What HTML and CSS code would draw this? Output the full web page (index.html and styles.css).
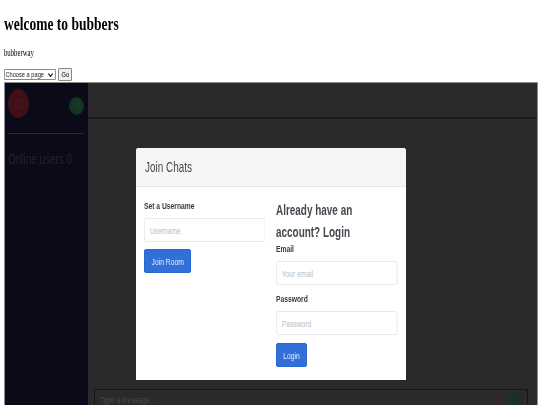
FILE: index.html
```html
<!DOCTYPE html>
<html lang="en">
<head>
  <meta charset="UTF-8">
  <title>welcome to bubbers</title>
  <link rel="stylesheet" href="styles.css">
</head>
<body>

  <div class="page">
    <h1 class="title"><span class="sq">welcome to bubbers</span></h1>
    <p class="tagline"><span class="sq">bubberway</span></p>

    <form class="page-picker">
      <div class="select-box">
        <select class="page-select">
          <option>Choose a page</option>
        </select>
      </div>
      <button type="button" class="page-go"><span class="sq-mid">Go</span></button>
    </form>

    <div class="chat-frame">
      <aside class="sidebar">
        <div class="sidebar-top">
          <div class="avatar">
            <svg width="7" height="10" viewBox="0 0 7 10"><rect x="1" y="1" width="5" height="8" fill="none" stroke="#52161f" stroke-width="1"/></svg>
          </div>
          <div class="mute">
            <svg width="8" height="10" viewBox="0 0 8 10"><path d="M1 1l6 8M5 1L2 4l3 3 2-4z" fill="none" stroke="#1b4027" stroke-width="1.1"/></svg>
          </div>
        </div>
        <div class="online"><span class="sq">Online users 0</span></div>
      </aside>

      <main class="room">
        <div class="room-top"></div>
        <div class="room-body"></div>
        <div class="composer">
          <span class="sq">Type a message...</span>
          <span class="composer-send"></span>
        </div>
      </main>

      <div class="modal">
        <div class="modal-head"><span class="sq">Join Chats</span></div>
        <div class="modal-body">
          <div class="col-join">
            <label class="field-label"><span class="sq">Set a Username</span></label>
            <input class="field-input" type="text" placeholder="Username">
            <button type="button" class="btn btn-join"><span class="sq-mid">Join Room</span></button>
          </div>
          <div class="col-login">
            <h4 class="login-title">
              <span class="sq">Already have an</span>
              <span class="sq">account? Login</span>
            </h4>
            <label class="field-label"><span class="sq">Email</span></label>
            <input class="field-input field-gap" type="text" placeholder="Your email">
            <label class="field-label"><span class="sq">Password</span></label>
            <input class="field-input" type="text" placeholder="Password">
            <button type="button" class="btn btn-login"><span class="sq-mid">Login</span></button>
          </div>
        </div>
      </div>
    </div>
  </div>

</body>
</html>
```

FILE: styles.css
```css
html, body {
  height: 405px;
  overflow: hidden;
}
body {
  margin: 0;
  background: #fff;
  font-family: "Liberation Serif", serif;
  color: #000;
}
.page {
  width: 540px;
  padding-left: 4px;
  box-sizing: border-box;
  filter: blur(0.35px);
}
/* all text in the picture is squeezed sideways */
.sq {
  display: inline-block;
  white-space: nowrap;
  transform: scaleX(0.71);
  transform-origin: 0 50%;
}
.sq-mid {
  display: inline-block;
  white-space: nowrap;
  transform: scaleX(0.71);
}
.title {
  margin: 0;
  padding-top: 13px;
  font-size: 19px;
  line-height: 22px;
  font-weight: bold;
}
.tagline {
  margin: 13px 0 0;
  font-size: 9.5px;
  line-height: 11px;
}
.page-picker {
  display: flex;
  align-items: center;
  gap: 2px;
  margin-top: 9px;
  height: 13px;
}
.select-box {
  width: 52px;
  height: 11px;
}
.page-select {
  display: block;
  appearance: none;
  width: 73px;
  height: 11px;
  padding: 0 0 0 1px;
  border: 1px solid #767676;
  border-radius: 1px;
  background: #fff url("data:image/svg+xml,%3Csvg xmlns='http://www.w3.org/2000/svg' width='7' height='4'%3E%3Cpath d='M.5.5l3 3 3-3' fill='none' stroke='%23222' stroke-width='1.4'/%3E%3C/svg%3E") no-repeat right 3px center;
  font-family: "Liberation Sans", sans-serif;
  font-size: 8px;
  line-height: 9px;
  color: #222;
  transform: scaleX(0.71);
  transform-origin: 0 0;
}
.page-go {
  display: flex;
  align-items: center;
  justify-content: center;
  width: 14px;
  height: 13px;
  padding: 0;
  border: 1px solid #8a8a8a;
  border-radius: 1px;
  background: #efefef;
  font-family: "Liberation Sans", sans-serif;
  font-size: 8px;
}
.chat-frame {
  position: relative;
  display: flex;
  width: 534px;
  height: 323px;
  margin-top: 1px;
  border: 1px solid #8c8c8c;
  border-bottom: 0;
  box-sizing: border-box;
}
.sidebar {
  width: 83px;
  flex-shrink: 0;
  background: #0b0a19;
  padding: 0 4px 0 3px;
  box-sizing: border-box;
}
.sidebar-top {
  display: flex;
  justify-content: space-between;
  height: 51px;
  border-bottom: 1px solid #2a2933;
  padding-top: 6px;
  box-sizing: border-box;
}
.avatar {
  display: flex;
  align-items: center;
  justify-content: center;
  width: 21px;
  height: 29px;
  border-radius: 50%;
  background: #401018;
}
.mute {
  display: flex;
  align-items: center;
  justify-content: center;
  width: 15px;
  height: 18px;
  margin-top: 8px;
  border-radius: 50%;
  background: #123420;
}
.online {
  margin-top: 17px;
  font-family: "Liberation Sans", sans-serif;
  font-size: 14px;
  line-height: 16px;
  color: #23222c;
}
.room {
  flex: 1;
  display: flex;
  flex-direction: column;
  background: #2a2a2a;
}
.room-top {
  height: 34px;
  border-bottom: 2px solid #1c1c1c;
}
.room-body {
  flex: 1;
}
.composer {
  display: flex;
  justify-content: space-between;
  height: 11px;
  margin: 0 9px 0 6px;
  padding: 4px 4px 0 5px;
  border: 1px solid #161616;
  border-bottom: 0;
  border-radius: 2px 2px 0 0;
  font-family: "Liberation Sans", sans-serif;
  font-size: 9.5px;
  line-height: 11px;
  color: #4a4a4a;
}
.composer-send {
  width: 16px;
  height: 11px;
  background: #1a2f25;
  border-radius: 1px;
}
.modal {
  position: absolute;
  left: 131px;
  top: 65px;
  width: 270px;
  height: 232px;
  background: #fff;
  border-radius: 3px 3px 0 0;
  font-family: "Liberation Sans", sans-serif;
  color: #444a50;
}
.modal-head {
  height: 39px;
  padding-left: 9px;
  background: #f5f5f5;
  border-bottom: 1px solid #e6e6e6;
  border-radius: 3px 3px 0 0;
  font-size: 14px;
  line-height: 38px;
  box-sizing: border-box;
}
.modal-body {
  display: flex;
  gap: 10px;
  padding-left: 8px;
}
.col-join {
  width: 122px;
  padding-top: 13px;
}
.col-login {
  width: 121px;
  padding-top: 12px;
}
.field-label {
  display: block;
  font-size: 9.5px;
  font-weight: bold;
  line-height: 11px;
  color: #343a40;
}
.field-input {
  display: block;
  width: 171px;
  height: 24px;
  margin-top: 7px;
  padding: 0 7px;
  border: 1px solid #e3e6e9;
  border-radius: 3px;
  box-sizing: border-box;
  background: #fff;
  font-family: "Liberation Sans", sans-serif;
  font-size: 9.5px;
  transform: scaleX(0.71);
  transform-origin: 0 0;
}
.field-input::placeholder {
  color: #b9bec3;
}
.field-gap {
  margin-bottom: 8px;
}
.btn {
  display: flex;
  align-items: center;
  justify-content: center;
  height: 24px;
  margin-top: 7px;
  padding: 0;
  border: 1px solid #2a68d0;
  border-radius: 2px;
  background: #3070d8;
  color: #e6eefb;
  font-family: "Liberation Sans", sans-serif;
  font-size: 9.5px;
}
.btn-join {
  width: 47px;
}
.btn-login {
  width: 31px;
  margin-top: 8px;
}
.login-title {
  margin: 0;
  font-size: 14px;
  font-weight: bold;
  line-height: 22px;
  color: #444a50;
}
.login-title .sq {
  display: block;
}
```
